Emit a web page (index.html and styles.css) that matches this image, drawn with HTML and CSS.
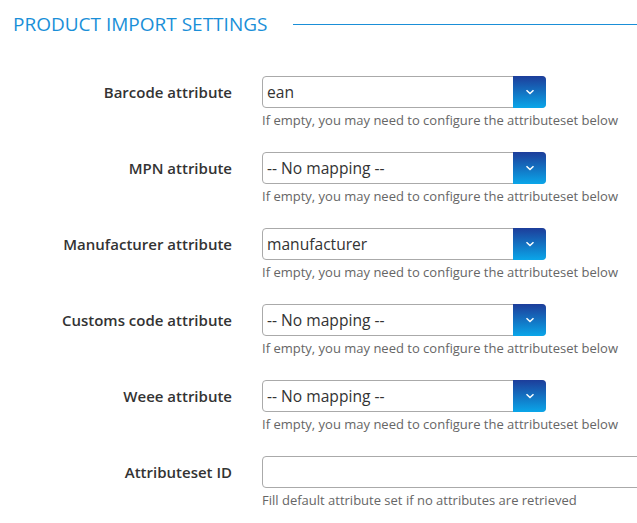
FILE: index.html
```html
<!DOCTYPE html>
<html lang="en">
<head>
  <meta charset="UTF-8">
  <meta name="viewport" content="width=device-width, initial-scale=1.0">
  <title>Product Import Settings</title>
  <link rel="stylesheet" href="styles.css">
</head>
<body>
  <div class="section-head">
    <h2>Product Import Settings</h2>
    <span class="head-line"></span>
  </div>

  <div class="form">
    <div class="form-row">
      <label for="barcodeAttr">Barcode attribute</label>
      <div class="field">
        <div class="select-wrap">
          <select id="barcodeAttr">
            <option value="ean" selected>ean</option>
          </select>
          <span class="select-btn"><svg width="10" height="6" viewBox="0 0 10 6"><path d="M1.5 1.2 L5 4.5 L8.5 1.2" fill="none" stroke="#fff" stroke-width="1.5"/></svg></span>
        </div>
        <div class="hint">If empty, you may need to configure the attributeset below</div>
      </div>
    </div>

    <div class="form-row">
      <label for="mpnAttr">MPN attribute</label>
      <div class="field">
        <div class="select-wrap">
          <select id="mpnAttr">
            <option value="" selected>-- No mapping --</option>
          </select>
          <span class="select-btn"><svg width="10" height="6" viewBox="0 0 10 6"><path d="M1.5 1.2 L5 4.5 L8.5 1.2" fill="none" stroke="#fff" stroke-width="1.5"/></svg></span>
        </div>
        <div class="hint">If empty, you may need to configure the attributeset below</div>
      </div>
    </div>

    <div class="form-row">
      <label for="manufacturerAttr">Manufacturer attribute</label>
      <div class="field">
        <div class="select-wrap">
          <select id="manufacturerAttr">
            <option value="manufacturer" selected>manufacturer</option>
          </select>
          <span class="select-btn"><svg width="10" height="6" viewBox="0 0 10 6"><path d="M1.5 1.2 L5 4.5 L8.5 1.2" fill="none" stroke="#fff" stroke-width="1.5"/></svg></span>
        </div>
        <div class="hint">If empty, you may need to configure the attributeset below</div>
      </div>
    </div>

    <div class="form-row">
      <label for="customsAttr">Customs code attribute</label>
      <div class="field">
        <div class="select-wrap">
          <select id="customsAttr">
            <option value="" selected>-- No mapping --</option>
          </select>
          <span class="select-btn"><svg width="10" height="6" viewBox="0 0 10 6"><path d="M1.5 1.2 L5 4.5 L8.5 1.2" fill="none" stroke="#fff" stroke-width="1.5"/></svg></span>
        </div>
        <div class="hint">If empty, you may need to configure the attributeset below</div>
      </div>
    </div>

    <div class="form-row">
      <label for="weeeAttr">Weee attribute</label>
      <div class="field">
        <div class="select-wrap">
          <select id="weeeAttr">
            <option value="" selected>-- No mapping --</option>
          </select>
          <span class="select-btn"><svg width="10" height="6" viewBox="0 0 10 6"><path d="M1.5 1.2 L5 4.5 L8.5 1.2" fill="none" stroke="#fff" stroke-width="1.5"/></svg></span>
        </div>
        <div class="hint">If empty, you may need to configure the attributeset below</div>
      </div>
    </div>

    <div class="form-row">
      <label for="attributesetId">Attributeset ID</label>
      <div class="field wide">
        <input type="text" id="attributesetId">
        <div class="hint">Fill default attribute set if no attributes are retrieved</div>
      </div>
    </div>
  </div>
</body>
</html>
```

FILE: styles.css
```css
body {
  margin: 0;
  font-family: 'Open Sans', 'Liberation Sans', sans-serif;
  color: #333;
  background-color: #fff;
  overflow: hidden;
}
.section-head {
  display: flex;
  align-items: center;
  padding: 11px 0 0 13px;
  height: 26px;
}
.section-head h2 {
  margin: 0;
  font-size: 19px;
  font-weight: 500;
  text-transform: uppercase;
  color: #1a8fd8;
  white-space: nowrap;
}
.head-line {
  flex: 1;
  height: 1px;
  margin-left: 26px;
  background-color: #1a8fd8;
}
.form {
  margin-top: 39px;
}
.form-row {
  display: flex;
  margin-bottom: 24px;
}
.form-row label {
  width: 232px;
  flex-shrink: 0;
  text-align: right;
  line-height: 32px;
  font-size: 15px;
  font-weight: 600;
  color: #333;
}
.field {
  margin-left: 30px;
  width: 284px;
}
.field.wide {
  width: 400px;
  flex-shrink: 0;
}
.select-wrap {
  position: relative;
  height: 32px;
}
select,
input[type="text"] {
  width: 100%;
  height: 32px;
  padding: 0 4px;
  border: 1px solid #aaa;
  border-radius: 4px;
  font-family: inherit;
  font-size: 15.6px;
  color: #333;
  background-color: #fff;
  box-sizing: border-box;
  appearance: none;
}
.select-btn {
  position: absolute;
  top: 0;
  right: 0;
  width: 33px;
  height: 32px;
  border-radius: 0 4px 4px 0;
  background: linear-gradient(to bottom, #1d3d9a, #0aa6e9);
  display: flex;
  align-items: center;
  justify-content: center;
}
.hint {
  margin-top: 4px;
  font-size: 13px;
  line-height: 16px;
  color: #666;
  white-space: nowrap;
}
```
